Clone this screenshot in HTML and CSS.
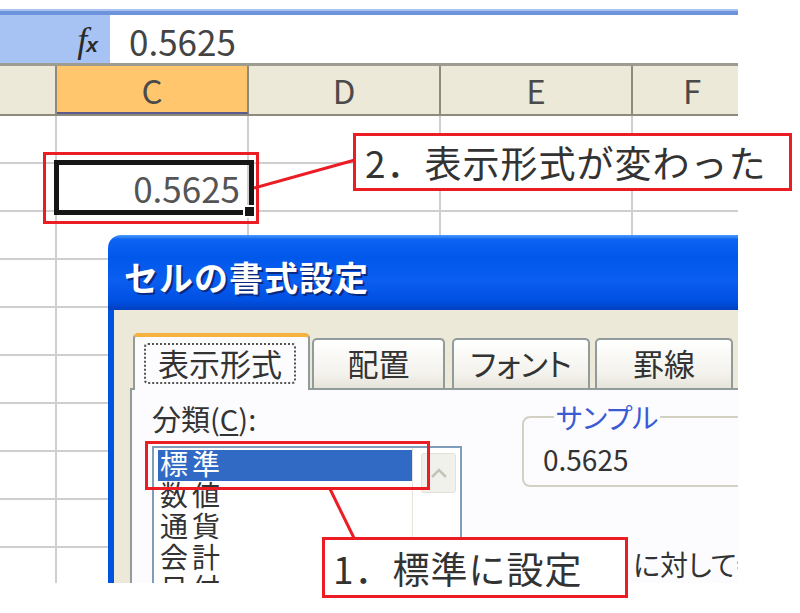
FILE: index.html
```html
<!DOCTYPE html>
<html lang="ja">
<head>
<meta charset="utf-8">
<title>セルの書式設定</title>
<link rel="stylesheet" href="styles.css">
</head>
<body>
<div class="page">
  <div class="screen">
    <div class="topline"></div>
    <div class="fbar">
      <div class="fbar-left"><span class="fx">f<span class="fx-x">x</span></span></div>
      <div class="fbar-value">0.5625</div>
    </div>
    <div class="colhead">
      <div class="hc col-b"></div>
      <div class="hc col-c sel">C</div>
      <div class="hc col-d">D</div>
      <div class="hc col-e">E</div>
      <div class="hc col-f">F</div>
    </div>
    <div class="grid">
      <div class="row"><div class="cell col-b"></div><div class="cell col-c"></div><div class="cell col-d"></div><div class="cell col-e"></div><div class="cell col-f"></div></div>
      <div class="row"><div class="cell col-b"></div><div class="cell col-c active"><span class="val">0.5625</span><span class="selbox"></span><span class="handle"></span></div><div class="cell col-d"></div><div class="cell col-e"></div><div class="cell col-f"></div></div>
      <div class="row"><div class="cell col-b"></div><div class="cell col-c"></div><div class="cell col-d"></div><div class="cell col-e"></div><div class="cell col-f"></div></div>
      <div class="row"><div class="cell col-b"></div><div class="cell col-c"></div><div class="cell col-d"></div><div class="cell col-e"></div><div class="cell col-f"></div></div>
      <div class="row"><div class="cell col-b"></div><div class="cell col-c"></div><div class="cell col-d"></div><div class="cell col-e"></div><div class="cell col-f"></div></div>
      <div class="row"><div class="cell col-b"></div><div class="cell col-c"></div><div class="cell col-d"></div><div class="cell col-e"></div><div class="cell col-f"></div></div>
      <div class="row"><div class="cell col-b"></div><div class="cell col-c"></div><div class="cell col-d"></div><div class="cell col-e"></div><div class="cell col-f"></div></div>
      <div class="row"><div class="cell col-b"></div><div class="cell col-c"></div><div class="cell col-d"></div><div class="cell col-e"></div><div class="cell col-f"></div></div>
      <div class="row"><div class="cell col-b"></div><div class="cell col-c"></div><div class="cell col-d"></div><div class="cell col-e"></div><div class="cell col-f"></div></div>
      <div class="row"><div class="cell col-b"></div><div class="cell col-c"></div><div class="cell col-d"></div><div class="cell col-e"></div><div class="cell col-f"></div></div>
    </div>

    <div class="dialog">
      <div class="titlebar">セルの書式設定</div>
      <div class="dbody">
        <div class="tabs">
          <div class="tab active"><span class="focus">表示形式</span></div>
          <div class="tab t2">配置</div>
          <div class="tab t3 palt">フォント</div>
          <div class="tab t4">罫線</div>
        </div>
        <div class="panel">
          <div class="leftcol">
            <div class="label">分類(<u>C</u>):</div>
            <div class="listbox">
              <ul class="items">
                <li class="item selected">標準</li>
                <li class="item">数値</li>
                <li class="item">通貨</li>
                <li class="item">会計</li>
                <li class="item">日付</li>
              </ul>
              <div class="scrollbar"><div class="sbtn"><svg width="20" height="12" viewBox="0 0 20 12"><path d="M3 10 L10 3 L17 10" fill="none" stroke="#c3c3b8" stroke-width="2.5"/></svg></div></div>
            </div>
          </div>
          <div class="rightcol">
            <fieldset class="sample">
              <legend>サンプル</legend>
              <div class="sval">0.5625</div>
            </fieldset>
            <p class="desc">に対して特</p>
          </div>
        </div>
      </div>
    </div>
  </div>

  <svg class="marks" width="800" height="613" viewBox="0 0 800 613">
    <rect x="44.5" y="153.5" width="213" height="69" fill="none" stroke="#ec1c24" stroke-width="3"/>
    <line x1="254" y1="188" x2="355" y2="160" stroke="#ec1c24" stroke-width="3"/>
    <rect x="146.5" y="442.5" width="282" height="46" fill="none" stroke="#ec1c24" stroke-width="3"/>
    <line x1="330" y1="489" x2="354" y2="538" stroke="#ec1c24" stroke-width="3"/>
  </svg>
  <div class="callout c2">2．表示形式が変わった</div>
  <div class="callout c1">1．標準に設定</div>
</div>
</body>
</html>
```
FILE: styles.css
```css
* { box-sizing: border-box; }
html, body { margin: 0; padding: 0; }
body {
  background: #fff;
  font-family: "Noto Sans CJK JP", "Noto Sans", sans-serif;
  color: #333;
}
.page { position: relative; width: 800px; height: 613px; overflow: hidden; background: #fff; }
.screen { position: relative; margin-top: 9px; width: 738px; height: 574px; overflow: hidden; background: #fff; }

.topline { height: 6px; background: linear-gradient(#a9c3f0 0, #a9c3f0 2px, #6d93dc 2px, #6d93dc 6px); }
.fbar { display: flex; height: 48px; }
.fbar-left {
  width: 110px; background: #a7c3f3;
  display: flex; justify-content: flex-end; align-items: center; padding-right: 12px;
}
.fx { font-family: "Liberation Serif", serif; font-style: italic; font-size: 36px; color: #2a2a2a; line-height: 1; margin-top: 2px; }
.fx-x { font-family: "Liberation Sans", sans-serif; font-weight: bold; font-style: italic; font-size: 21px; margin-left: -1px; }
.fbar-value { flex: 1; background: #fff; font-size: 35px; line-height: 46px; padding: 3px 0 0 19px; color: #444; }

.colhead {
  display: flex; height: 53px;
  border-top: 3px solid #9e9b90; border-bottom: 2px solid #8e8b7e;
  background: #ece9d8;
}
.hc {
  border-right: 2px solid #8e8b7e;
  text-align: center; font-size: 33px; line-height: 48px; color: #4a4a4a;
}
.hc.sel { background: #ffc66e; border-bottom: 2px solid #5a5a8c; }
.col-b { width: 57px; flex: none; }
.col-c, .col-d, .col-e { width: 192px; flex: none; }
.col-f { width: 120px; flex: none; }

.grid { display: flex; flex-direction: column; }
.row { display: flex; height: 48px; }
.cell { border-right: 2px solid #cfcfcf; border-bottom: 2px solid #cfcfcf; height: 48px; }
.cell.active { position: relative; text-align: right; padding-right: 7px; }
.val { font-size: 35px; line-height: 48px; color: #555; }
.selbox {
  position: absolute; left: -3px; top: -4px; width: 200px; height: 55px;
  border: 5px solid #161616;
}
.handle {
  position: absolute; left: 186px; top: 41px; width: 13px; height: 13px;
  background: #161616; border: 2px solid #fff;
}

.dialog { position: absolute; left: 108px; top: 226px; width: 700px; height: 400px; }
.titlebar {
  height: 75px; border-radius: 13px 0 0 0;
  background: linear-gradient(#4a9bff 0, #0d63f2 6%, #0058ea 30%, #0a5ef0 60%, #0050e2 88%, #0040c0 100%);
  color: #fff; font-weight: bold; font-size: 34px; line-height: 75px; padding: 4px 0 0 16px;
  text-shadow: 2px 2px 0 #0a2a80;
  letter-spacing: 1px;
}
.dbody {
  background: #ece9d8; border-left: 6px solid #0052e0;
  padding: 23px 0 0 16px; height: 330px;
}
.tabs { display: flex; align-items: flex-end; padding-left: 3px; position: relative; z-index: 1; }
.tab {
  height: 50px; border: 2px solid #919b9c; border-bottom: none; border-radius: 5px 5px 0 0;
  background: linear-gradient(#ffffff, #f3f2ec 70%, #e6e4da);
  text-align: center; font-size: 31px; line-height: 46px; color: #333;
}
.tab.active {
  width: 177px; height: 57px; margin-bottom: -2px; background: #fcfcfe;
  border-top: 4px solid #f6b13e; padding: 6px 12px 6px 9px;
}
.focus {
  display: block; height: 41px; border: 2px dotted #555; border-radius: 4px;
  line-height: 36px; font-size: 31px;
}
.t2 { width: 133px; margin-left: 2px; }
.t3 { width: 138px; margin-left: 7px; }
.t4 { width: 138px; margin-left: 5px; }
.palt { font-feature-settings: "palt"; }

.panel {
  display: flex; background: #fcfcfe; border: 2px solid #919b9c;
  height: 260px; padding: 8px 0 0 20px;
}
.leftcol { width: 310px; flex: none; }
.label { font-size: 29px; line-height: 40px; height: 48px; color: #333; }
.label u { text-decoration-thickness: 2px; text-underline-offset: 3px; }
.listbox {
  display: flex; height: 200px; border: 2px solid #7f9db9; border-bottom: none; background: #fff;
}
.items { list-style: none; margin: 0; padding: 2px 0 0 4px; flex: 1; }
.item {
  font-family: "Liberation Sans", "Noto Sans CJK JP", sans-serif;
  font-size: 28px; line-height: 31px; height: 31px; color: #333; padding-left: 2px; letter-spacing: 4px;
}
.item.selected { background: #316ac5; color: #fff; }
.scrollbar { width: 48px; flex: none; border-left: 1px solid #e4e4dc; padding: 5px 4px 0 8px; }
.sbtn {
  height: 40px; border: 1px solid #e1e1d8; border-radius: 3px; background: #f1f1ec;
  display: flex; align-items: center; justify-content: center;
}

.rightcol { margin-left: 60px; width: 340px; flex: none; }
.sample {
  margin: 4px 0 0 0; padding: 9px 0 0 19px; height: 85px; width: 300px;
  border: 2px solid #d3d1c2; border-radius: 8px;
}
.sample legend {
  font-size: 28px; line-height: 30px; color: #3a5bd4; padding: 0 2px; margin-left: 11px;
  font-feature-settings: "palt";
}
.sval { font-size: 28px; line-height: 36px; color: #333; }
.desc {
  margin: 62px 0 0 111px; font-size: 28px; line-height: 30px; color: #333;
  white-space: nowrap; font-feature-settings: "palt";
}

.marks { position: absolute; left: 0; top: 0; pointer-events: none; }
.callout {
  position: absolute; background: #fff; border: 3px solid #ec1c24;
  display: flex; align-items: center; font-size: 37px; color: #333; white-space: nowrap;
}
.c2 { left: 353px; top: 133px; width: 439px; height: 58px; padding-left: 9px; letter-spacing: 1px; }
.c1 { left: 322px; top: 537px; width: 306px; height: 61px; padding-left: 8px; letter-spacing: 1px; }
```
